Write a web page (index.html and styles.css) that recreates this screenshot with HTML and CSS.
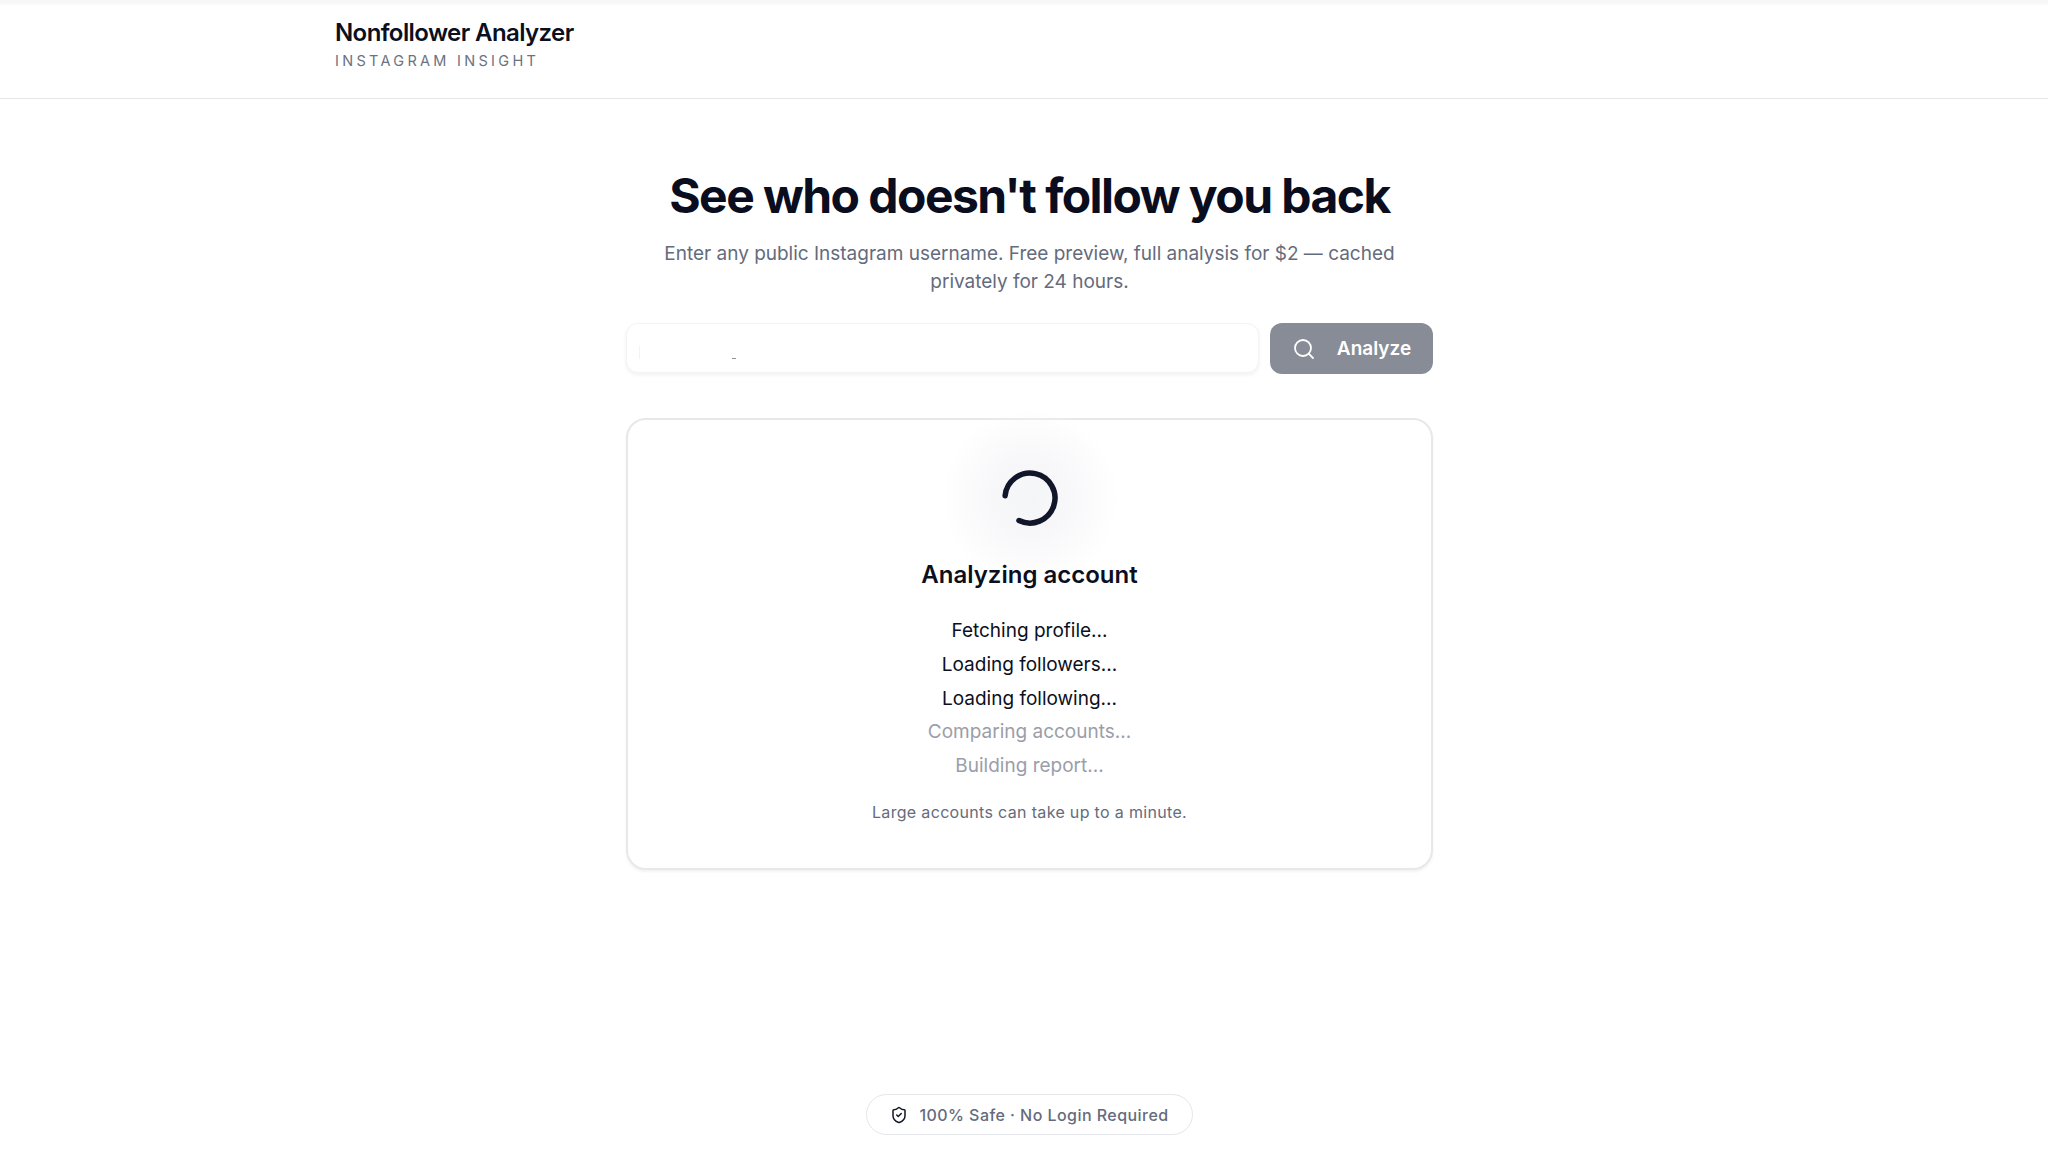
FILE: index.html
```html
<!DOCTYPE html>
<html lang="en">
<head>
<meta charset="utf-8">
<title>Nonfollower Analyzer</title>
<link rel="stylesheet" href="styles.css">
</head>
<body>
<div class="page">
  <header class="topbar">
    <div class="brand">
      <div class="brand-title">Nonfollower Analyzer</div>
      <div class="brand-sub">INSTAGRAM INSIGHT</div>
    </div>
  </header>
  <main class="main">
    <h1 class="headline">See who doesn't follow you back</h1>
    <p class="lede">Enter any public Instagram username. Free preview, full analysis for $2 — cached privately for 24 hours.</p>
    <form class="search">
      <div class="field"><span class="caret"></span><span class="speck"></span></div>
      <button class="go" type="button">
        <svg class="go-icon" viewBox="0 0 24 24" fill="none" stroke="currentColor" stroke-width="1.8" stroke-linecap="round" stroke-linejoin="round"><circle cx="11" cy="11" r="8"/><path d="m21 21-4.3-4.3"/></svg>
        <span>Analyze</span>
      </button>
    </form>
    <section class="card">
      <div class="spin-wrap">
        <svg class="spinner" viewBox="0 0 60 60" fill="none" stroke="currentColor" stroke-width="5.500" stroke-linecap="round"><path d="M5.1 27.7A25 25 0 1 1 19 52.500"/></svg>
      </div>
      <h2 class="card-title">Analyzing account</h2>
      <ul class="steps">
        <li>Fetching profile...</li>
        <li>Loading followers...</li>
        <li>Loading following...</li>
        <li class="pending">Comparing accounts...</li>
        <li class="pending">Building report...</li>
      </ul>
      <p class="note">Large accounts can take up to a minute.</p>
    </section>
  </main>
  <footer class="foot">
    <div class="pill">
      <svg class="pill-icon" viewBox="0 0 24 24" fill="none" stroke="currentColor" stroke-width="2" stroke-linecap="round" stroke-linejoin="round"><path d="M20 13c0 5-3.500 7.500-7.660 8.950a1 1 0 0 1-.67-.01C7.500 20.500 4 18 4 13V6a1 1 0 0 1 1-1c2 0 4.500-1.200 6.240-2.720a1.170 1.170 0 0 1 1.520 0C14.510 3.810 17 5 19 5a1 1 0 0 1 1 1z"/><path d="m9 12 2 2 4-4"/></svg>
      <span>100% Safe · No Login Required</span>
    </div>
  </footer>
</div>
</body>
</html>
```
FILE: styles.css
```css
* { box-sizing: border-box; }
html, body { margin: 0; padding: 0; }
body {
  background: #fff;
  color: #0b0f1e;
  font-family: Inter, "Liberation Sans", sans-serif;
}
.page {
  min-height: 1151px;
  display: flex;
  flex-direction: column;
  background: linear-gradient(#f7f7f8 0, #f7f7f8 3px, #fff 6px);
}
.topbar {
  height: 99px;
  border-bottom: 1px solid #e5e6ea;
  padding: 0 335px 9px;
  display: flex;
  align-items: center;
  flex-shrink: 0;
}
.brand-title {
  font-size: 24px;
  line-height: 30px;
  font-weight: 600;
  letter-spacing: -0.6px;
  color: #0b0f1e;
}
.brand-sub {
  font-size: 14.500px;
  line-height: 20px;
  letter-spacing: 3.3px;
  color: #6b7280;
  margin-top: 3px;
}
.main {
  width: 807px;
  margin: 0 0 0 626px;
  flex: 1;
  display: flex;
  flex-direction: column;
  align-items: center;
  padding-top: 67px;
}
.headline {
  margin: 0;
  font-size: 48px;
  line-height: 60px;
  font-weight: 700;
  letter-spacing: -1.55px;
  color: #0a0d1e;
  white-space: nowrap;
}
.lede {
  margin: 14px 0 0;
  width: 760px;
  text-align: center;
  font-size: 19px;
  line-height: 28px;
  letter-spacing: -0.01px;
  color: #646b7c;
}
.search {
  margin-top: 27px;
  width: 100%;
  display: flex;
  gap: 11px;
  align-items: stretch;
}
.field {
  flex: 1;
  height: 50px;
  border-radius: 12px;
  background: #fff;
  border: 1px solid #f4f4f6;
  box-shadow: 0 2px 4px rgba(15, 23, 42, 0.06);
  display: flex;
  align-items: flex-end;
  padding: 0 0 13px 12px;
}
.caret { width: 1px; height: 13px; background: #eef4fb; }
.speck { width: 4px; height: 1.500px; background: #8b8f98; margin-left: 92px; }
.go {
  width: 163px;
  height: 51px;
  border: 0;
  border-radius: 12px;
  background: #888c96;
  color: #fff;
  font: 600 19px/28px Inter, sans-serif;
  display: flex;
  align-items: center;
  justify-content: center;
  gap: 21px;
  padding: 0;
}
.go-icon { width: 24px; height: 24px; }
.card {
  margin-top: 44px;
  width: 100%;
  height: 452px;
  border: 2px solid #e7e8eb;
  border-radius: 20px;
  background: #fff;
  box-shadow: 0 2px 3px rgba(15, 23, 42, 0.05);
  display: flex;
  flex-direction: column;
  align-items: center;
  padding-top: 48px;
}
.spin-wrap {
  position: relative;
  width: 60px;
  height: 60px;
}
.spin-wrap::before {
  content: "";
  position: absolute;
  left: -60px;
  top: -60px;
  width: 180px;
  height: 180px;
  background: radial-gradient(circle at center, #f4f5f7 0, #f8f8fa 32%, rgba(255, 255, 255, 0) 70%);
}
.spinner { position: relative; display: block; width: 60px; height: 60px; color: #12162a; }
.card-title {
  position: relative;
  margin: 31px 0 0;
  font-size: 24px;
  line-height: 32px;
  font-weight: 600;
  letter-spacing: 0;
  color: #0b0f1e;
}
.steps {
  list-style: none;
  margin: 23px 0 0;
  padding: 0;
  text-align: center;
  font-size: 19px;
  line-height: 33.800px;
  color: #0b0f1e;
}
.pending { color: #9a9ea8; }
.note {
  margin: 17px 0 0;
  font-size: 16px;
  line-height: 24px;
  letter-spacing: 0.33px;
  color: #646b7c;
}
.foot {
  display: flex;
  justify-content: center;
  padding: 0 0 16px 10px;
}
.pill {
  height: 41px;
  width: 327px;
  border: 1px solid #e5e6ea;
  border-radius: 21px;
  background: #fff;
  display: flex;
  align-items: center;
  justify-content: center;
  gap: 11px;
  padding-left: 1px;
  font-size: 16px;
  font-weight: 500;
  letter-spacing: 0.45px;
  color: #646b7c;
}
.pill-icon { width: 18px; height: 18px; color: #111525; }
```
